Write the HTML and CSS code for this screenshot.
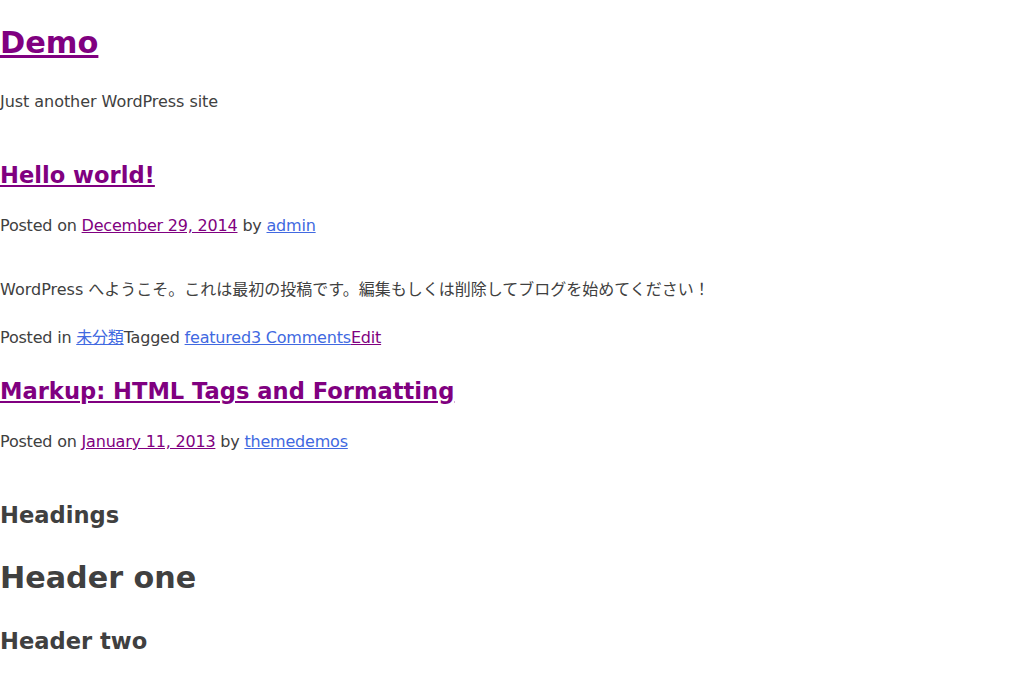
FILE: index.html
```html
<!DOCTYPE html>
<html lang="ja">
<head>
<meta charset="utf-8">
<title>Demo</title>
<link rel="stylesheet" href="styles.css">
</head>
<body>
<header class="site-header">
  <h1 class="site-title"><a class="visited" href="#">Demo</a></h1>
  <p class="site-description">Just another WordPress site</p>
</header>
<main class="site-main">
  <article class="post post-first">
    <h2 class="entry-title"><a class="visited" href="#">Hello world!</a></h2>
    <div class="entry-meta">Posted on <a class="visited" href="#">December 29, 2014</a> by <a class="link" href="#">admin</a></div>
    <div class="entry-content">
      <p>WordPress へようこそ。これは最初の投稿です。編集もしくは削除してブログを始めてください！</p>
    </div>
    <footer class="entry-footer">Posted in <a class="link" href="#">未分類</a>Tagged <a class="link" href="#">featured</a><a class="link" href="#">3 Comments</a><a class="visited" href="#">Edit</a></footer>
  </article>
  <article class="post post-second">
    <h2 class="entry-title"><a class="visited" href="#">Markup: HTML Tags and Formatting</a></h2>
    <div class="entry-meta">Posted on <a class="visited" href="#">January 11, 2013</a> by <a class="link" href="#">themedemos</a></div>
    <div class="entry-content">
      <h2 class="content-h-first">Headings</h2>
      <h1 class="content-h">Header one</h1>
      <h2 class="content-h">Header two</h2>
    </div>
  </article>
</main>
</body>
</html>
```
FILE: styles.css
```css
html, body {
  margin: 0;
  padding: 0;
  background: #fff;
}
body {
  font-family: "DejaVu Sans", "Noto Sans CJK JP", sans-serif;
  font-size: 16px;
  line-height: 24px;
  color: #404040;
}
a.visited { color: #800080; }
a.link { color: #4169e1; }

h1, h2, p { margin: 0; }

.site-title {
  font-size: 30.4px;
  line-height: 48px;
  font-weight: bold;
  padding-top: 19px;
}
.site-description {
  margin-top: 23px;
  letter-spacing: -0.05px;
}
.entry-title {
  font-size: 22.6px;
  line-height: 36px;
  font-weight: bold;
}
.post-first .entry-title { margin-top: 43px; }
.post-second .entry-title { margin-top: 23px; }
.entry-meta {
  margin-top: 21px;
  letter-spacing: -0.2px;
}
.entry-content p { margin-top: 40px; }
.entry-footer {
  margin-top: 24px;
  letter-spacing: -0.2px;
}

.content-h-first {
  margin-top: 43px;
  font-size: 22.6px;
  line-height: 36px;
}
h1.content-h {
  margin-top: 21px;
  font-size: 30.2px;
  line-height: 48px;
}
h2.content-h {
  margin-top: 21px;
  font-size: 22.6px;
  line-height: 36px;
}
```
